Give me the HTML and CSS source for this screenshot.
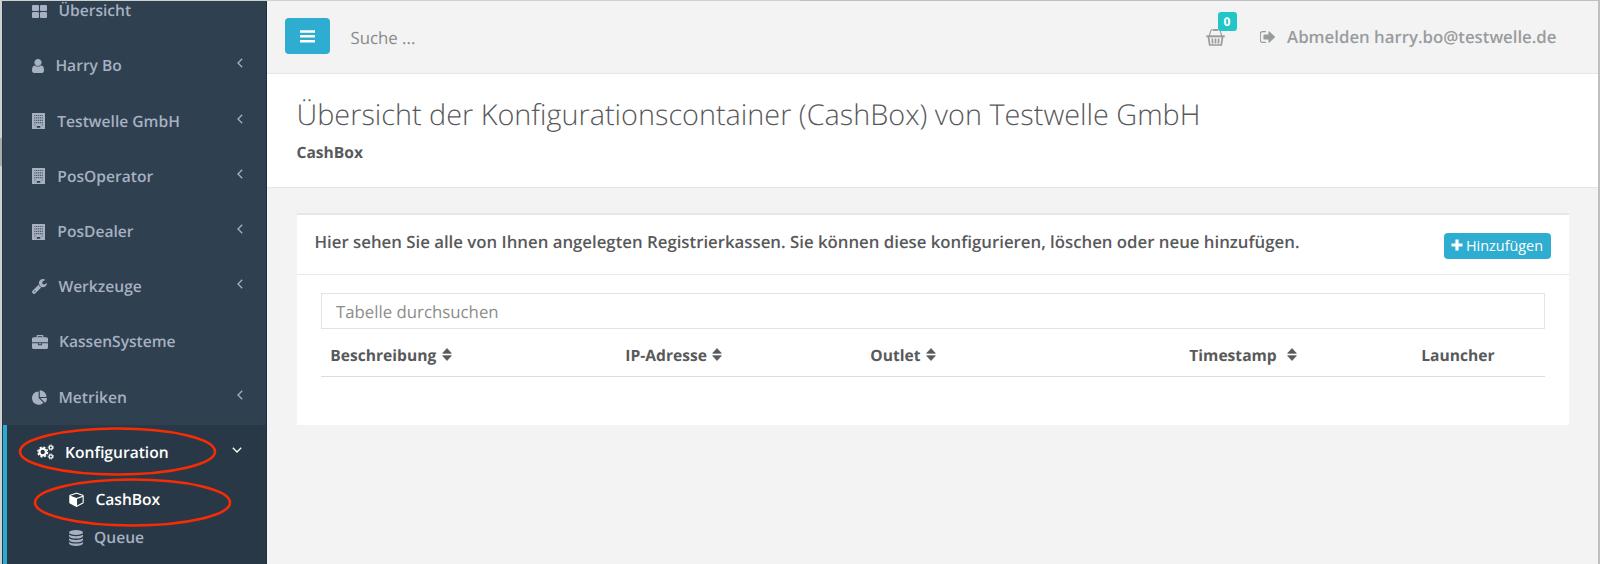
FILE: index.html
```html
<!DOCTYPE html>
<html lang="de">
<head>
<meta charset="utf-8">
<title>CashBox</title>
<link rel="stylesheet" href="styles.css">
</head>
<body>
<svg class="defs" width="0" height="0">
  <symbol id="building" viewBox="0 0 13 16"><path fill-rule="evenodd" d="M.6 0h11.800q.6 0 .6.6v14.800q0 .6-.6.6H.6q-.6 0-.6-.6V.6Q0 0 .6 0zM4.700 12.900v1.900h3.600v-1.900z"/><path d="M2.200 2.500h8.700M2.200 4.900h8.700M2.200 7.300h8.700M2.200 9.700h8.700M2.200 12h1.300M9.600 12h1.300" fill="none" stroke="#2f4050" stroke-opacity=".75" stroke-width="1.200" stroke-dasharray="1.200 .675"/></symbol>
  <symbol id="angle" viewBox="0 0 6 10"><path d="M5.200.8L1 5l4.200 4.200" fill="none" stroke="currentColor" stroke-width="1.300"/></symbol>
  <symbol id="sort" viewBox="0 0 10 13"><path d="M.6 5.300L5 .5l4.400 4.800zM.6 7.700h8.800L5 12.500z" stroke="currentColor" stroke-width=".7" stroke-linejoin="round"/></symbol>
</svg>
<div class="app">
  <nav class="sidebar">
    <ul class="menu">
      <li class="item first"><svg class="icon" width="15" height="13" viewBox="0 0 15 13"><rect width="7" height="6" rx="1"/><rect x="8" width="7" height="6" rx="1"/><rect y="7" width="7" height="6" rx="1"/><rect x="8" y="7" width="7" height="6" rx="1"/></svg><span class="label">Übersicht</span></li>
      <li class="item"><svg class="icon" width="12" height="14" viewBox="256 128 1280 1536" preserveAspectRatio="none"><path d="M1536 1399q0 109-62.500 187t-150.500 78h-854q-88 0-150.500-78t-62.500-187q0-85 8.500-160.500t31.500-152 58.500-131 94-89 134.500-34.500q131 128 313 128t313-128q76 0 134.500 34.500t94 89 58.500 131 31.500 152 8.500 160.500zm-256-887q0 159-112.500 271.500t-271.500 112.500-271.500-112.500-112.500-271.500 112.500-271.500 271.500-112.500 271.500 112.500 112.500 271.500z"/></svg><span class="label">Harry Bo</span><svg class="angle"><use href="#angle"/></svg></li>
      <li class="item"><svg class="icon" width="13" height="16"><use href="#building"/></svg><span class="label wide">Testwelle GmbH</span><svg class="angle"><use href="#angle"/></svg></li>
      <li class="item"><svg class="icon" width="13" height="16"><use href="#building"/></svg><span class="label wide">PosOperator</span><svg class="angle"><use href="#angle"/></svg></li>
      <li class="item"><svg class="icon" width="13" height="16"><use href="#building"/></svg><span class="label wide">PosDealer</span><svg class="angle"><use href="#angle"/></svg></li>
      <li class="item"><svg class="icon" width="15" height="15" viewBox="85 128 1643 1643"><path d="M448 1472q0-26-19-45t-45-19-45 19-19 45 19 45 45 19 45-19 19-45zm644-420l-682 682q-37 37-90 37-52 0-91-37l-106-108q-38-36-38-90 0-53 38-91l681-681q39 98 114.500 173.500t173.500 114.500zm634-435q0 39-23 106-47 134-164.500 217.500t-258.500 83.500q-185 0-316.500-131.500t-131.500-316.500 131.500-316.500 316.500-131.500q58 0 121.500 16.500t107.500 46.500q16 11 16 28t-16 28l-293 169v224l193 107q5-3 79-48.500t135.500-81 70.500-35.500q15 0 23.500 10t8.500 25z"/></svg><span class="label">Werkzeuge</span><svg class="angle"><use href="#angle"/></svg></li>
      <li class="item"><svg class="icon" width="16" height="14" viewBox="0 0 1792 1536" preserveAspectRatio="none"><path d="M640 256h512v-128h-512v128zm1152 640v480q0 66-47 113t-113 47h-1472q-66 0-113-47t-47-113v-480h672v160q0 26 19 45t45 19h320q26 0 45-19t19-45v-160h672zm-768 0v128h-256v-128h256zm768-480v384h-1792v-384q0-66 47-113t113-47h352v-160q0-40 28-68t68-28h576q40 0 68 28t28 68v160h352q66 0 113 47t47 113z"/></svg><span class="label narrow">KassenSysteme</span></li>
      <li class="item"><svg class="icon" width="15" height="15" viewBox="0 0 1728 1664"><path d="M768 890l546 546q-106 108-247.500 168t-298.500 60q-209 0-385.500-103t-279.500-279.500-103-385.500 103-385.500 279.500-279.500 385.500-103v762zm187 6h773q0 157-60 298.500t-168 247.500zm709-128h-768v-768q209 0 385.500 103t279.500 279.500 103 385.500z"/></svg><span class="label">Metriken</span><svg class="angle"><use href="#angle"/></svg></li>
    </ul>
    <div class="active-group">
      <div class="item current"><svg class="icon line" width="17" height="16" viewBox="0 0 17 16"><circle cx="5.700" cy="8" r="3.300" stroke-width="2.200"/><circle cx="5.700" cy="8" r="4.900" stroke-width="1.400" stroke-dasharray="2.200 1.648"/><circle cx="13.800" cy="3.500" r="1.700" stroke-width="1.300"/><circle cx="13.800" cy="3.500" r="2.600" stroke-width=".9" stroke-dasharray="1.300 1.034"/><circle cx="13.800" cy="12.500" r="1.700" stroke-width="1.300"/><circle cx="13.800" cy="12.500" r="2.600" stroke-width=".9" stroke-dasharray="1.300 1.034"/></svg><span class="label narrow">Konfiguration</span><svg class="angle down"><use href="#angle"/></svg></div>
      <div class="sub current"><svg class="icon" width="15" height="15" viewBox="64 64 1664 1728"><path d="M896 1629l640-349v-636l-640 233v752zm-64-865l698-254-698-254-698 254zm832-252v768q0 35-18 65t-49 47l-704 384q-28 16-61 16t-61-16l-704-384q-31-17-49-47t-18-65v-768q0-40 23-73t61-47l704-256q22-8 44-8t44 8l704 256q38 14 61 47t23 73z" transform="translate(64)"/></svg><span class="label">CashBox</span></div>
      <div class="sub"><svg class="icon" width="14" height="16" viewBox="0 0 14 16"><ellipse cx="7" cy="2.500" rx="7" ry="2.500"/><path d="M0 4.500q2 1.700 7 1.700t7-1.700v1.700q-1 2.300-7 2.300t-7-2.300zM0 8.200q2 1.700 7 1.700t7-1.700v1.700q-1 2.300-7 2.300t-7-2.300zM0 11.900q2 1.700 7 1.700t7-1.700v1.700q-1 2.300-7 2.300t-7-2.300z"/></svg><span class="label narrow">Queue</span></div>
    </div>
    <svg class="marks" width="260" height="110" viewBox="0 420 260 110"><ellipse cx="117.500" cy="451.500" rx="97.500" ry="23"/><ellipse cx="132.500" cy="502.500" rx="97.500" ry="23"/></svg>
  </nav>
  <main class="main">
    <header class="topbar">
      <button class="toggle"><svg width="15" height="13" viewBox="0 0 15 13"><path d="M0 1.500h15M0 6.300h15M0 11.200h15" stroke="#fff" stroke-width="2.400"/></svg></button>
      <span class="search">Suche ...</span>
      <span class="basket"><svg class="line" width="19" height="17" viewBox="0 0 19 17"><path d="M3.200 7L4.800 1.800Q5.100.8 6.200.8h6.600q1.100 0 1.400 1L15.800 7" stroke-width="1.100"/><path d="M7.200 1h4.600" stroke-width="2"/><path d="M.3 7.300h18.400" stroke-width="2"/><path d="M2.500 8l1.200 8h11.600l1.200-8M6.300 9.500l.3 5M9.500 9.500v5M12.700 9.500l-.3 5" stroke-width="1.700"/></svg><span class="badge">0</span></span>
      <svg class="signout" width="15" height="12" viewBox="96 256 1536 1280" preserveAspectRatio="none"><path d="M704 1440q0 4 1 20t.5 26.500-3 23.500-10 19.500-20.500 6.500h-320q-119 0-203.500-84.500t-84.500-203.500v-704q0-119 84.500-203.500t203.500-84.500h320q13 0 22.500 9.500t9.500 22.500q0 4 1 20t.5 26.500-3 23.500-10 19.500-20.500 6.500h-320q-66 0-113 47t-47 113v704q0 66 47 113t113 47h312l11.500 1 11.500 3 8 5.500 7 9 2 13.500zm928-544q0 26-19 45l-544 544q-19 19-45 19t-45-19-19-45v-288h-448q-26 0-45-19t-19-45v-384q0-26 19-45t45-19h448v-288q0-26 19-45t45-19 45 19l544 544q19 19 19 45z"/></svg>
      <span class="logout">Abmelden harry.bo@testwelle.de</span>
    </header>
    <section class="heading">
      <h1 class="title">Übersicht der Konfigurationscontainer (CashBox) von Testwelle GmbH</h1>
      <div class="crumb">CashBox</div>
    </section>
    <section class="panel">
      <div class="panel-head">
        <span class="intro">Hier sehen Sie alle von Ihnen angelegten Registrierkassen. Sie können diese konfigurieren, löschen oder neue hinzufügen.</span>
        <button class="add"><svg width="12" height="12" viewBox="0 0 12 12"><path d="M6 .5v11M.5 6h11" stroke="#fff" stroke-width="3.200"/></svg><span>Hinzufügen</span></button>
      </div>
      <div class="panel-body">
        <div class="filter">Tabelle durchsuchen</div>
        <div class="thead">
          <div class="th">Beschreibung<svg class="sort"><use href="#sort"/></svg></div>
          <div class="th">IP-Adresse<svg class="sort"><use href="#sort"/></svg></div>
          <div class="th">Outlet<svg class="sort"><use href="#sort"/></svg></div>
          <div class="th th-time">Timestamp<svg class="sort"><use href="#sort"/></svg></div>
          <div class="th">Launcher</div>
        </div>
      </div>
    </section>
  </main>
</div>
</body>
</html>
```
FILE: styles.css
```css
* { box-sizing: border-box; }
body { margin: 0; height: 564px; overflow: hidden; font-family: "Open Sans", sans-serif; font-size: 16.8px; color: #58595b; text-rendering: geometricPrecision; }
svg { display: block; flex: none; fill: currentColor; }
svg.line { fill: none; stroke: currentColor; }
.defs { position: absolute; }
button { border: 0; margin: 0; font: inherit; color: #fff; background: #2fadd1; }
.app { display: flex; height: 564px; padding: 1px 2px 0 2px; background: linear-gradient(#aaacac, #aaacac) 0 138px / 2px 28px no-repeat, linear-gradient(90deg, #cfd0d0 50%, #bfc0c2 50%); }
.sidebar { position: relative; flex: none; width: 265px; height: 563px; overflow: hidden; background: #2f4050; color: #a7b1c2; font-size: 15.6px; font-weight: 600; border-left: 1px solid #25384a; border-right: 1px solid #1c2f42; }
.menu { list-style: none; margin: 0; padding: 0; }
.item { display: flex; align-items: center; height: 55.200px; padding: 0 23px 1px 29px; line-height: 24px; }
.item.first { height: 37.400px; padding-bottom: 18px; line-height: 19px; }
.angle { width: 6px; height: 10px; margin: -4px 0 0 auto; }
.icon { margin-top: 1px; }
.label { margin-left: 11.400px; white-space: nowrap; }
.label.wide { margin-left: 12.300px; }
.label.narrow { margin-left: 11px; }
.active-group { height: 139px; background: #293846; border-left: 4px solid #29abd0; }
.active-group .item { padding-left: 30px; }
.down { transform: rotate(-90deg); margin-right: 3px; }
.current { color: #fff; }
.sub { display: flex; align-items: center; height: 38.300px; padding-left: 62px; }
.marks { position: absolute; left: -3px; top: 419px; fill: none; stroke: #f72c05; stroke-width: 2.600; }
.main { flex: 1; min-width: 0; background: #f3f3f4; }
.topbar { display: flex; align-items: center; height: 73px; padding: 0 41px 0 18px; border-bottom: 1px solid #e5e6e8; color: #999c9e; }
.toggle { display: flex; align-items: center; justify-content: center; width: 45px; height: 36px; border-radius: 4px; margin-bottom: 2px; padding: 0; }
.search { margin-left: 20.500px; color: #8a8a8a; padding-top: 1px; }
.basket { position: relative; margin-left: auto; }
.badge { position: absolute; left: 12px; top: -17px; width: 19px; height: 19px; border-radius: 3px; background: #23c6c8; color: #fff; font-size: 12px; font-weight: 700; line-height: 19px; text-align: center; }
.signout { margin-left: 35px; }
.logout { margin: 0 .5px 1px 12.500px; font-weight: 600; white-space: nowrap; }
.heading { height: 114px; padding: 20px 29.500px 0; background: #fff; border-bottom: 1px solid #e5e6e8; }
.title { margin: 0; font-size: 28.800px; font-weight: 300; line-height: 42px; white-space: nowrap; }
.crumb { margin-top: 4px; font-size: 15.600px; font-weight: 700; line-height: 24px; }
.panel { margin: 25px 29px 0 29.500px; height: 212px; background: #fff; border-top: 2px solid #e4e6ea; }
.panel-head { display: flex; justify-content: space-between; height: 60px; padding: 14px 18px 0; border-bottom: 1px solid #e7eaec; }
.intro { font-weight: 600; line-height: 25px; white-space: nowrap; }
.add { display: flex; align-items: center; gap: 3px; width: 107px; height: 26px; margin-top: 4px; padding: 0 7px 2px; border-radius: 4px; font-size: 14.400px; }
.panel-body { padding: 18px 24px 0; }
.filter { height: 36px; border: 1px solid #e2e3e5; padding: 0 14.500px; line-height: 35px; color: #8c8c8c; }
.thead { display: grid; grid-template-columns: 295px 245px 319px 232px 1fr; height: 48px; padding-left: 9.800px; border-bottom: 1.500px solid #dcdddf; font-size: 15.600px; font-weight: 700; }
.th { display: flex; align-items: center; padding-top: 5px; }
.sort { width: 10px; height: 13px; margin: -2px 0 0 5.500px; }
.th-time .sort { margin-left: 10px; }
```
